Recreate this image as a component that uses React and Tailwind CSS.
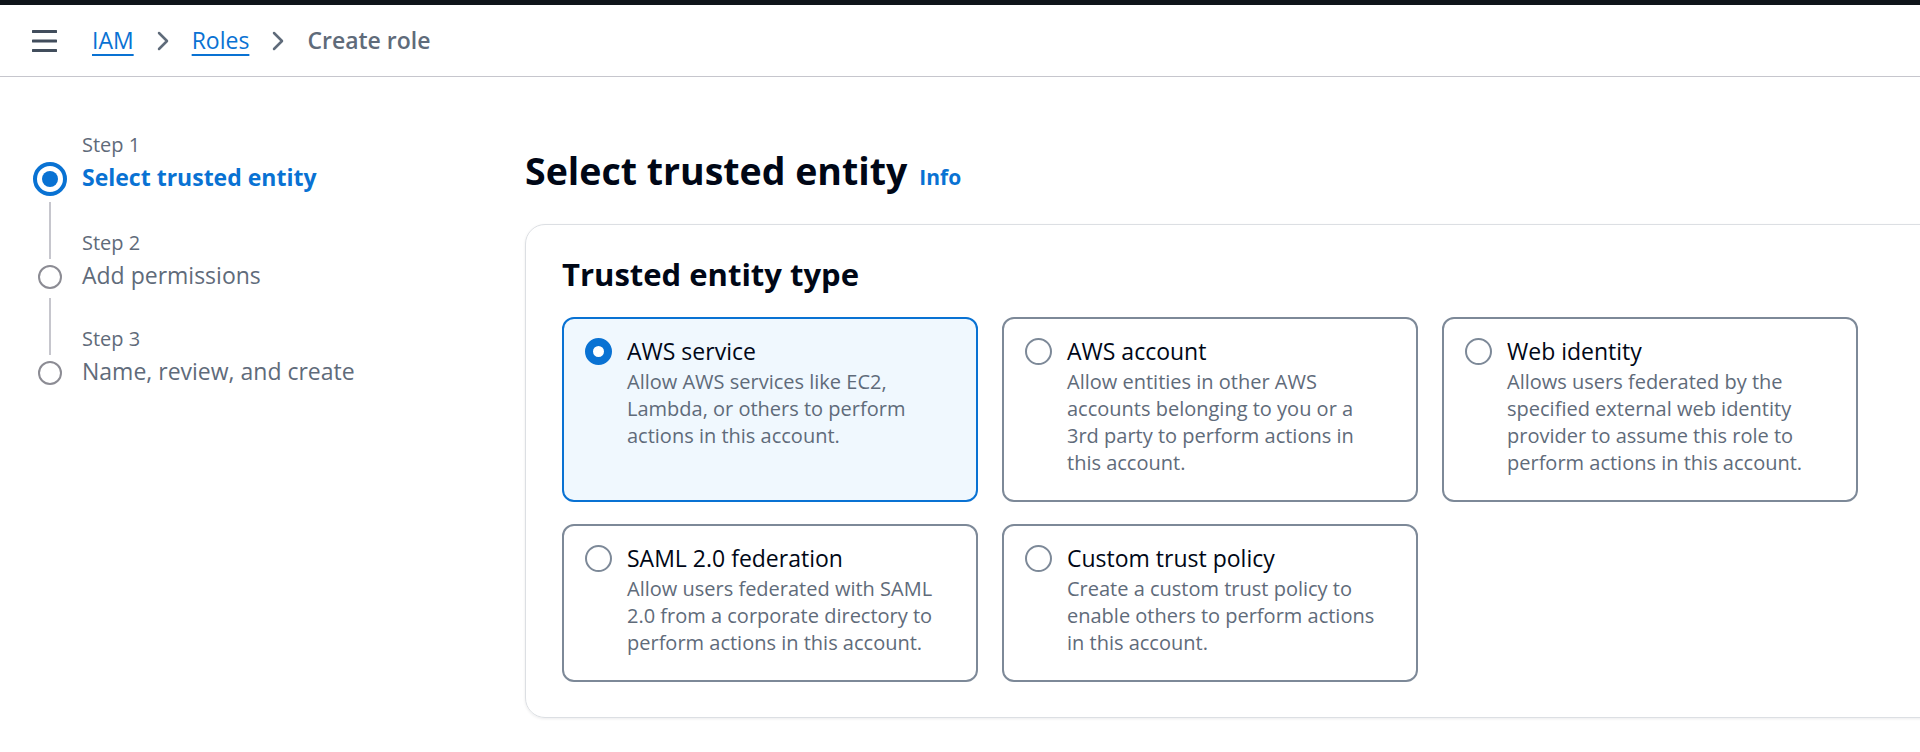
import { Fragment } from "react";

const steps = [
  { label: "Select trusted entity", active: true },
  { label: "Add permissions" },
  { label: "Name, review, and create" },
];

const entities = [
  {
    title: "AWS service",
    lines: ["Allow AWS services like EC2,", "Lambda, or others to perform", "actions in this account."],
    selected: true,
  },
  {
    title: "AWS account",
    lines: ["Allow entities in other AWS", "accounts belonging to you or a", "3rd party to perform actions in", "this account."],
  },
  {
    title: "Web identity",
    lines: ["Allows users federated by the", "specified external web identity", "provider to assume this role to", "perform actions in this account."],
  },
  {
    title: "SAML 2.0 federation",
    lines: ["Allow users federated with SAML", "2.0 from a corporate directory to", "perform actions in this account."],
  },
  {
    title: "Custom trust policy",
    lines: ["Create a custom trust policy to", "enable others to perform actions", "in this account."],
  },
];

const Chevron = () => (
  <svg width="14" height="20" viewBox="0 0 14 20" fill="none" className="shrink-0">
    <path d="M3 2l8 8-8 8" stroke="#5f6b7a" strokeWidth="2.5" strokeLinecap="round" strokeLinejoin="round" />
  </svg>
);

const Header = () => (
  <div className="h-[72px] flex items-center pl-[32px] border-b border-[#c6c6cd]">
    {/* Menu */}
    <svg width="25" height="24" viewBox="0 0 25 24" className="shrink-0">
      <path d="M1 2.5h23M1 12h23M1 21.5h23" stroke="#414d5c" strokeWidth="3.2" strokeLinecap="round" />
    </svg>
    <div className="flex items-center gap-[22px] ml-[35px] text-[23px] leading-[33px]">
      <a className="text-[#0972d3] underline decoration-2 underline-offset-[5px]">IAM</a>
      <Chevron />
      <a className="text-[#0972d3] underline decoration-2 underline-offset-[5px]">Roles</a>
      <Chevron />
      <span className="text-[#5f6b7a] font-semibold">Create role</span>
    </div>
  </div>
);

const StepNav = () => (
  <nav className="w-[525px] shrink-0 pl-[33px] pt-[51px]">
    <div className="grid grid-cols-[34px_1fr] gap-x-[15px]">
      {steps.map((s, i) => (
        <Fragment key={s.label}>
          <div className={`flex justify-center ${i ? "pt-[6px]" : ""}`}>
            {i > 0 && <div className="w-[2px] bg-[#c6c6cd]" />}
          </div>
          <div className={`${i ? "pt-[30px]" : ""} text-[20px] leading-[33px] text-[#5f6b7a]`}>Step {i + 1}</div>
          <div className="flex justify-center">
            {s.active ? (
              <div className="mt-[1px] w-[34px] h-[34px] rounded-full border-[4px] border-[#0972d3] flex items-center justify-center">
                <div className="w-[16px] h-[16px] rounded-full bg-[#0972d3]"></div>
              </div>
            ) : (
              <div className="mt-[6px] w-[24px] h-[24px] rounded-full border-2 border-[#8c8c94] bg-white"></div>
            )}
          </div>
          <div
            className={`text-[23px] leading-[33px] whitespace-nowrap ${
              s.active ? "font-bold text-[#0972d3]" : "text-[#5f6b7a]"
            }`}
          >
            {s.label}
          </div>
        </Fragment>
      ))}
    </div>
  </nav>
);

const EntityCard = ({ title, lines, selected }) => (
  <div
    className={`rounded-[12px] border-2 pl-[21px] pr-[16px] pt-[16px] pb-[24px] flex gap-[15px] ${
      selected ? "border-[#0972d3] bg-[#f0f8fe]" : "border-[#7d8998] bg-white"
    }`}
  >
    {selected ? (
      <div className="mt-[3px] w-[27px] h-[27px] shrink-0 rounded-full border-[8px] border-[#0972d3] bg-white"></div>
    ) : (
      <div className="mt-[3px] w-[27px] h-[27px] shrink-0 rounded-full border-2 border-[#7d8998] bg-white"></div>
    )}
    <div>
      <div className="text-[23px] leading-[33px] text-[#000716]">{title}</div>
      {lines.map((l) => (
        <div key={l} className="text-[20px] leading-[27px] text-[#5f6b7a] whitespace-nowrap">
          {l}
        </div>
      ))}
    </div>
  </div>
);

export default function App() {
  return (
    <div className="w-full h-[752px] overflow-hidden bg-white font-['Open_Sans',sans-serif]">
      <div className="h-[5px] bg-[#0f141a]"></div>
      <Header />
      <div className="flex">
        <StepNav />
        <main className="pt-[70px] shrink-0">
          <div className="flex items-baseline gap-[12px] mb-[29px]">
            <h1 className="text-[37.5px] leading-[48px] font-bold text-[#000716]">Select trusted entity</h1>
            <a className="text-[21px] font-bold text-[#0972d3]">Info</a>
          </div>
          <div className="w-[1440px] rounded-[20px] border border-[#dcdfe3] shadow-[0_1px_3px_rgba(0,7,22,0.08)] pl-[36px] pt-[29px] pb-[35px]">
            <h2 className="text-[31px] leading-[40px] font-bold text-[#000716] mb-[23px]">Trusted entity type</h2>
            <div className="grid grid-cols-[416px_416px_416px] gap-x-[24px] gap-y-[22px]">
              {entities.map((e) => (
                <EntityCard key={e.title} {...e} />
              ))}
            </div>
          </div>
        </main>
      </div>
    </div>
  );
}
